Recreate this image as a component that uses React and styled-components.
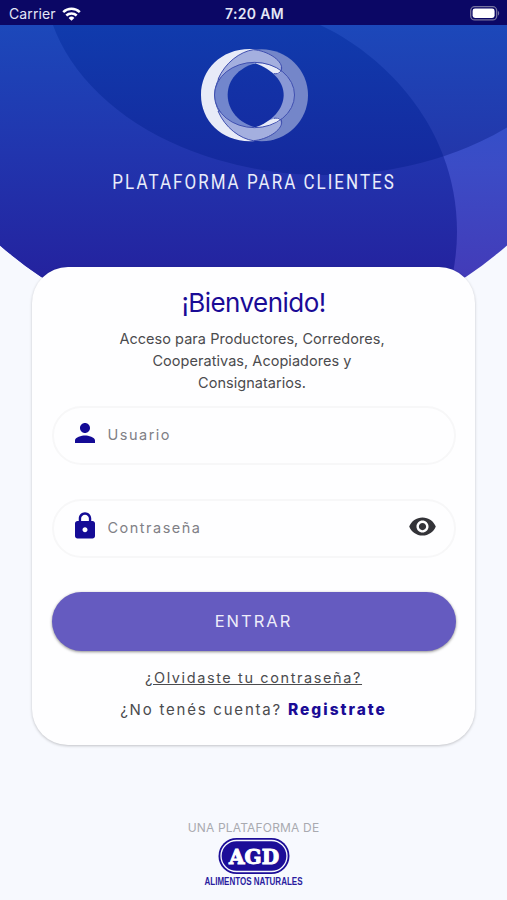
import React from "react";
import styled, { createGlobalStyle } from "styled-components";
import { MdPerson, MdLock, MdVisibility } from "react-icons/md";

const GlobalStyle = createGlobalStyle`
  * {
    box-sizing: border-box;
  }
  body {
    margin: 0;
    background-color: #f7f8fd;
    font-family: Inter, "Liberation Sans", sans-serif;
  }
`;

const Screen = styled.div`
  position: relative;
  width: 507px;
  height: 900px;
  display: flex;
  flex-direction: column;
  align-items: center;
  background-color: #f7f9fe;
  overflow: hidden;
`;

const StatusBar = styled.div`
  width: 100%;
  height: 25px;
  display: grid;
  grid-template-columns: 1fr auto 1fr;
  align-items: center;
  padding: 2px 7px 0 9px;
  background-color: #0b0765;
  color: #e4e6f6;
  font-size: 14px;
  z-index: 1;
`;

const Carrier = styled.div`
  display: flex;
  align-items: center;
  gap: 6px;
  letter-spacing: 0.1px;
`;

const Time = styled.div`
  font-weight: 600;
  letter-spacing: 0.35px;
`;

const Battery = styled.svg`
  justify-self: end;
`;

const Backdrop = styled.svg`
  position: absolute;
  top: 0;
  left: 0;
`;

const Header = styled.header`
  height: 242px;
  display: flex;
  flex-direction: column;
  align-items: center;
  padding-top: 15px;
  z-index: 1;
`;

const Mark = styled.svg`
  margin-left: 3px;
`;

const Platform = styled.h2`
  margin: 20px 0 0;
  padding-left: 1px;
  color: #e9ecfa;
  font-family: Roboto, sans-serif;
  font-size: 20px;
  font-weight: 400;
  line-height: 24px;
  letter-spacing: 2.4px;
  white-space: nowrap;
  transform: scaleX(0.848);
`;

const Card = styled.main`
  width: 443px;
  height: 478px;
  display: flex;
  flex-direction: column;
  align-items: center;
  padding: 20px 20px 0;
  border-radius: 36px;
  background-color: #fefeff;
  box-shadow: 0 1px 3px rgba(0, 0, 0, 0.22);
  z-index: 1;
`;

const Title = styled.h1`
  margin: 0;
  color: #1a0b96;
  font-size: 26px;
  font-weight: 400;
  line-height: 32px;
  letter-spacing: -0.55px;
`;

const Desc = styled.p`
  width: 300px;
  margin: 9px 0 12px;
  padding-right: 3px;
  color: #4b4b4e;
  font-size: 14.5px;
  line-height: 22px;
  letter-spacing: 0.04px;
  text-align: center;
`;

const Field = styled.label`
  width: 404px;
  height: 59px;
  display: flex;
  align-items: center;
  gap: 8px;
  margin-bottom: ${({ $gap }) => $gap}px;
  padding: 0 17px 2px 16px;
  border: 2px solid #f7f7f8;
  border-radius: 30px;
  color: #140b96;

  svg {
    flex: none;
    margin-top: -3px;
  }
`;

const Input = styled.input`
  flex: 1;
  min-width: 0;
  padding: 0;
  border: none;
  outline: none;
  background: transparent;
  font-family: inherit;
  font-size: 14.5px;
  letter-spacing: 1.5px;

  &::placeholder {
    color: #808086;
    opacity: 1;
  }
`;

const Eye = styled(MdVisibility)`
  color: #333338;
`;

const Button = styled.button`
  width: 404px;
  height: 59px;
  flex: none;
  padding-bottom: 3px;
  border: none;
  border-radius: 30px;
  background-color: #655bc0;
  box-shadow: 0 1px 3px rgba(0, 0, 0, 0.45);
  color: #eeedfa;
  font-family: inherit;
  font-size: 16.5px;
  letter-spacing: 2px;
`;

const Link = styled.a`
  margin-top: 17px;
  color: #4b4b4e;
  font-size: 14.5px;
  line-height: 20px;
  letter-spacing: 1.6px;
  text-decoration: underline;
`;

const SignUp = styled.p`
  margin: 12px 0 0;
  color: #4b4b4e;
  font-size: 15px;
  line-height: 20px;
  letter-spacing: 1.78px;
  white-space: nowrap;
`;

const Strong = styled.b`
  color: #1a0b96;
  font-size: 15.5px;
  font-weight: 800;
  letter-spacing: 2px;
`;

const Footer = styled.footer`
  display: flex;
  flex-direction: column;
  align-items: center;
  margin-top: 75px;
  color: #a9aab0;
  font-size: 12px;
  line-height: 16px;
  letter-spacing: 0.17px;
`;

const Brand = styled.svg`
  margin: 1px 0 0 1px;
  overflow: visible;
`;

const WifiIcon = () => (
  <svg width="19" height="14" viewBox="0 0 19 14" fill="none" stroke="#fff" strokeWidth="2.5">
    <path d="M1.2 5.2a12 12 0 0 1 16.6 0" />
    <path d="M4.3 8.5a7.5 7.5 0 0 1 10.4 0" />
    <path d="M9.5 13.8 6.6 10.9a4.1 4.1 0 0 1 5.8 0z" fill="#fff" stroke="none" />
  </svg>
);

const BatteryIcon = () => (
  <Battery width="30" height="15" viewBox="0 0 30 15">
    <rect x="0.7" y="0.7" width="26" height="13.2" rx="4" fill="none" stroke="#77749f" strokeWidth="1.3" />
    <rect x="2.6" y="2.6" width="22" height="9.4" rx="2.4" fill="#fff" />
    <path d="M28 5v4.6c1.6-.6 1.6-4 0-4.6z" fill="#77749f" />
  </Battery>
);

const Shapes = () => (
  <Backdrop width="507" height="345" viewBox="0 0 507 345">
    <defs>
      <linearGradient id="base" gradientUnits="userSpaceOnUse" x1="0" y1="25" x2="0" y2="280">
        <stop offset="0" stopColor="#2456cd" />
        <stop offset="0.55" stopColor="#3b4cc6" />
        <stop offset="1" stopColor="#433bb8" />
      </linearGradient>
      <linearGradient id="left" gradientUnits="userSpaceOnUse" x1="0" y1="25" x2="0" y2="280">
        <stop offset="0" stopColor="#1c48ba" />
        <stop offset="0.5" stopColor="#2135ae" />
        <stop offset="1" stopColor="#24229e" />
      </linearGradient>
      <linearGradient id="top" gradientUnits="userSpaceOnUse" x1="0" y1="25" x2="0" y2="175">
        <stop offset="0" stopColor="#1c48ba" />
        <stop offset="1" stopColor="#2434a8" />
      </linearGradient>
      <linearGradient id="both" gradientUnits="userSpaceOnUse" x1="0" y1="25" x2="0" y2="175">
        <stop offset="0" stopColor="#103bad" />
        <stop offset="1" stopColor="#15289d" />
      </linearGradient>
      <clipPath id="disc">
        <circle cx="253.5" cy="-43" r="384" />
      </clipPath>
      <clipPath id="oval">
        <ellipse cx="325" cy="-25" rx="281" ry="200" />
      </clipPath>
    </defs>
    <g clipPath="url(#disc)">
      <rect width="507" height="345" fill="url(#base)" />
      <path d="M0 25H320C375 50 457 120 457 232C457 272 445 310 430 345H0Z" fill="url(#left)" />
      <g clipPath="url(#oval)">
        <rect width="507" height="180" fill="url(#top)" />
        <path d="M0 25H320C375 50 457 120 457 232H0Z" fill="url(#both)" />
      </g>
    </g>
  </Backdrop>
);

const Logo = () => (
  <Mark width="130" height="110" viewBox="0 0 390 330">
    <defs>
      <linearGradient id="ring">
        <stop offset="0.5" stopColor="#7286cd" />
        <stop offset="0.5" stopColor="#8998d5" />
      </linearGradient>
      <linearGradient id="hole" x2="0" y2="1">
        <stop offset="0" stopColor="#1234a8" />
        <stop offset="1" stopColor="#142da3" />
      </linearGradient>
    </defs>
    <ellipse cx="215" cy="165.5" rx="139" ry="138" fill="#7486c9" />
    <path
      d="M195 28C100 20 33 85 33 165S100 311 195 303C150 290 75 240 73 165C75 90 150 40 195 28Z"
      fill="#e8ebf8"
    />
    <g fill="#a4afdf" stroke="#3f4fb0" strokeWidth="3">
      <path d="M84 118C105 68 150 35 190 29C232 32 275 60 275 84C275 96 266 103 256 101L190 120Z" />
      <path d="M84 213C105 263 150 296 190 302C232 299 275 271 275 247C275 235 266 232 256 234L190 210Z" />
    </g>
    <ellipse cx="193.5" cy="165" rx="120" ry="98" fill="url(#ring)" />
    <g fill="#e8ebf8">
      <path d="M190 69C225 68 254 78 273 92C271 103 260 105 249 99L210 86Z" />
      <path d="M190 262C225 263 254 253 273 241C271 232 260 231 249 237L210 250Z" />
    </g>
    <path
      d="M196 70C246 88 281 124 281 165S246 245 196 262C146 249 113 210 113 165S146 84 196 70Z"
      fill="url(#hole)"
    />
    <g fill="none" stroke="#3f4fb0" strokeWidth="3">
      <ellipse cx="193.5" cy="165" rx="120" ry="98" />
      <path d="M274 80C276 94 268 103 252 101M274 251C276 240 268 232 252 235" />
    </g>
  </Mark>
);

const BrandLogo = () => (
  <Brand width="100" height="52" viewBox="0 0 100 52">
    <rect x="14.5" y="1" width="71" height="36" rx="18" fill="#1c0d98" />
    <rect x="17" y="3.5" width="66" height="31" rx="15.5" fill="none" stroke="#f7f9fe" strokeWidth="1.3" />
    <text
      x="50"
      y="26.5"
      textAnchor="middle"
      textLength="50"
      lengthAdjust="spacingAndGlyphs"
      letterSpacing="0"
      fontFamily="DejaVu Serif, serif"
      fontWeight="700"
      fontSize="20"
      fill="#fff"
      stroke="#fff"
      strokeWidth="1"
    >
      AGD
    </text>
    <text
      x="49.5"
      y="47.5"
      textAnchor="middle"
      textLength="98"
      lengthAdjust="spacingAndGlyphs"
      letterSpacing="0"
      fontFamily="Liberation Sans, sans-serif"
      fontWeight="700"
      fontSize="10"
      fill="#2a1c9e"
    >
      ALIMENTOS NATURALES
    </text>
  </Brand>
);

const App = () => {
  return (
    <>
      <GlobalStyle />
      <Screen>
        <Shapes />
        <StatusBar>
          <Carrier>
            Carrier <WifiIcon />
          </Carrier>
          <Time>7:20 AM</Time>
          <BatteryIcon />
        </StatusBar>
        <Header>
          <Logo />
          <Platform>PLATAFORMA PARA CLIENTES</Platform>
        </Header>
        <Card>
          <Title>¡Bienvenido!</Title>
          <Desc>Acceso para Productores, Corredores, Cooperativas, Acopiadores y Consignatarios.</Desc>
          <Field $gap={34}>
            <MdPerson size={30} />
            <Input type="text" placeholder="Usuario" />
          </Field>
          <Field $gap={34}>
            <MdLock size={30} />
            <Input type="password" placeholder="Contraseña" />
            <Eye size={29} />
          </Field>
          <Button>ENTRAR</Button>
          <Link>¿Olvidaste tu contraseña?</Link>
          <SignUp>
            ¿No tenés cuenta? <Strong>Registrate</Strong>
          </SignUp>
        </Card>
        <Footer>
          UNA PLATAFORMA DE
          <BrandLogo />
        </Footer>
      </Screen>
    </>
  );
};

export default App;
